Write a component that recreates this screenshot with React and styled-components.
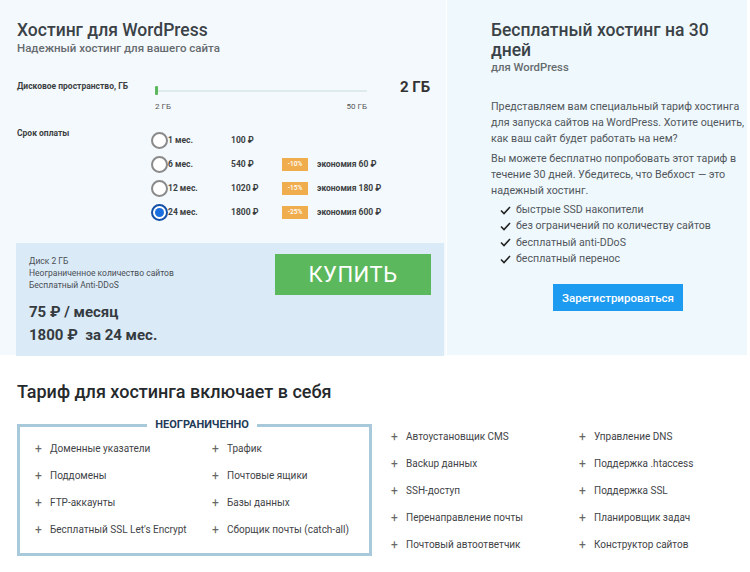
import React, { useState } from "react";
import styled, { createGlobalStyle } from "styled-components";

const Global = createGlobalStyle`
  html, body { margin: 0; padding: 0; background: #fff; }
  body { font-family: Roboto, "Noto Sans", "Liberation Sans", sans-serif; color: #3a4147; }
  * { box-sizing: border-box; }
`;

const Page = styled.div`
  width: 750px;
  height: 572px;
  overflow: hidden;
`;

const Top = styled.div`
  display: flex;
  height: 355px;
`;

const LeftPanel = styled.div`
  width: 446px;
  background: #f4f9fd;
  padding-top: 20px;
`;

const RightPanel = styled.div`
  width: 300px;
  margin-left: 1px;
  background: #eff8fc;
  padding: 20px 0 0 44px;
`;

const Title = styled.h1`
  margin: 0;
  font-size: 17.5px;
  line-height: 20px;
  font-weight: 500;
  color: #3b4247;
`;

const LeftTitle = styled(Title)`
  padding-left: 17px;
`;

const Subtitle = styled.div`
  padding-left: 17px;
  font-size: 11.5px;
  line-height: 16px;
  color: #666b6f;
  font-weight: 500;
`;

const Row = styled.div`
  display: grid;
  grid-template-columns: ${(p) => p.$cols};
  padding-left: 17px;
  margin-top: ${(p) => p.$mt || 0}px;
`;

const SmallLabel = styled.div`
  font-size: 8.5px;
  font-weight: 700;
  color: #3c3f42;
  line-height: 12px;
`;

const SliderWrap = styled.div`
  display: flex;
  flex-direction: column;
`;

const Track = styled.div`
  position: relative;
  height: 2px;
  margin-top: 10px;
  background: #dfeaea;
`;

const Thumb = styled.span`
  position: absolute;
  left: 0;
  top: -4px;
  width: 3px;
  height: 9px;
  background: #5cb85c;
  border-radius: 1px;
`;

const Ticks = styled.div`
  display: flex;
  justify-content: space-between;
  margin-top: 10px;
  font-size: 8px;
  line-height: 10px;
  color: #555;
`;

const BigValue = styled.div`
  padding-left: 33px;
  font-size: 15px;
  font-weight: 700;
  color: #333;
  line-height: 14px;
`;

const Options = styled.div`
  display: flex;
  flex-direction: column;
  gap: 6px;
  margin-top: 4px;
`;

const Option = styled.label`
  display: grid;
  grid-template-columns: 17px 63px 51px 35px auto;
  align-items: center;
  height: 18px;
  font-size: 8.5px;
  font-weight: 700;
  color: #3c3f42;
  cursor: pointer;
`;

const Radio = styled.span`
  width: 17px;
  height: 17px;
  border-radius: 50%;
  border: 2px solid ${(p) => (p.$on ? "#1450a8" : "#8a8a8a")};
  background: #fff;
  display: flex;
  align-items: center;
  justify-content: center;
  &::after {
    content: "";
    width: 9px;
    height: 9px;
    border-radius: 50%;
    background: ${(p) => (p.$on ? "#1a6fe0" : "transparent")};
  }
`;

const Badge = styled.span`
  width: 26px;
  height: 13px;
  background: #f0ad4e;
  color: #fff;
  font-size: 6.5px;
  font-weight: 500;
  display: flex;
  align-items: center;
  justify-content: center;
`;

const BuyBox = styled.div`
  margin: 22px 0 0 16px;
  width: 428px;
  height: 113px;
  background: #dbeaf7;
  padding: 12px 13px 0 13px;
  display: flex;
  justify-content: space-between;
  align-items: flex-start;
`;

const Features = styled.div`
  font-size: 8.5px;
  line-height: 12px;
  color: #4a4f54;
`;

const Prices = styled.div`
  margin-top: 10px;
`;

const Price = styled.div`
  font-size: 15px;
  font-weight: 700;
  line-height: 23px;
  color: #353b40;
`;

const BuyButton = styled.button`
  margin-top: -1px;
  width: 156px;
  height: 41px;
  border: 0;
  background: #5cb85c;
  color: #fff;
  font-family: inherit;
  font-size: 22px;
  letter-spacing: 0.5px;
  cursor: pointer;
`;

const RightSub = styled.div`
  font-size: 11.3px;
  line-height: 16px;
  color: #666b6f;
  font-weight: 500;
`;

const Para = styled.p`
  margin: ${(p) => p.$mt}px 0 0;
  width: 262px;
  font-size: 10.7px;
  line-height: 16px;
  color: #51575c;
`;

const Checks = styled.ul`
  list-style: none;
  margin: 3px 0 0 9px;
  padding: 0;
`;

const Check = styled.li`
  display: flex;
  align-items: center;
  gap: 5px;
  font-size: 10.6px;
  line-height: 16.3px;
  color: #51575c;
`;

const RegButton = styled.button`
  margin: 17px 0 0 62px;
  width: 130px;
  height: 27px;
  border: 0;
  background: #1d9bf0;
  color: #fff;
  font-family: inherit;
  font-size: 11.5px;
  font-weight: 500;
  cursor: pointer;
`;

const Bottom = styled.div`
  padding: 26px 0 0 17px;
`;

const H2 = styled.h2`
  margin: 0;
  font-size: 18px;
  line-height: 22px;
  font-weight: 500;
  color: #25292c;
`;

const BottomRow = styled.div`
  display: flex;
  margin-top: 16px;
`;

const Fieldset = styled.fieldset`
  margin: 0;
  min-width: 0;
  width: 355px;
  height: 137px;
  border: 3px solid #a7c9d9;
  padding: 11px 0 0 15px;
`;

const Legend = styled.legend`
  margin: 0 auto;
  padding: 0 8px;
  font-size: 11px;
  font-weight: 700;
  color: #1f3a57;
  line-height: 12px;
`;

const ItemGrid = styled.div`
  display: grid;
  grid-template-columns: ${(p) => p.$cols};
  row-gap: ${(p) => p.$gap}px;
`;

const Item = styled.div`
  display: flex;
  align-items: center;
  font-size: 10px;
  line-height: 14px;
  color: #3f4448;
  white-space: nowrap;
`;

const Plus = styled.span`
  width: 15px;
  color: #666;
  font-size: 12px;
`;

const OuterList = styled.div`
  padding: 11px 0 0 19px;
`;

const periods = [
  { m: "1 мес.", p: "100 ₽" },
  { m: "6 мес.", p: "540 ₽", d: "-10%", s: "экономия 60 ₽" },
  { m: "12 мес.", p: "1020 ₽", d: "-15%", s: "экономия 180 ₽" },
  { m: "24 мес.", p: "1800 ₽", d: "-25%", s: "экономия 600 ₽" },
];

const unlimited = [
  "Доменные указатели",
  "Трафик",
  "Поддомены",
  "Почтовые ящики",
  "FTP-аккаунты",
  "Базы данных",
  "Бесплатный SSL Let's Encrypt",
  "Сборщик почты (catch-all)",
];

const extra = [
  "Автоустановщик CMS",
  "Управление DNS",
  "Backup данных",
  "Поддержка .htaccess",
  "SSH-доступ",
  "Поддержка SSL",
  "Перенаправление почты",
  "Планировщик задач",
  "Почтовый автоответчик",
  "Конструктор сайтов",
];

const checks = [
  "быстрые SSD накопители",
  "без ограничений по количеству сайтов",
  "бесплатный anti-DDoS",
  "бесплатный перенос",
];

const CheckIcon = () => (
  <svg width="11" height="9" viewBox="0 0 11 9">
    <path d="M1 4.5 L4 7.5 L10 1" fill="none" stroke="#222" strokeWidth="1.6" />
  </svg>
);

const App = () => {
  const [sel, setSel] = useState(3);

  return (
    <Page>
      <Global />
      <Top>
        <LeftPanel>
          <LeftTitle>Хостинг для WordPress</LeftTitle>
          <Subtitle>Надежный хостинг для вашего сайта</Subtitle>

          <Row $cols="138px 212px auto" $mt={24}>
            <SmallLabel>Дисковое пространство, ГБ</SmallLabel>
            <SliderWrap>
              <Track>
                <Thumb />
              </Track>
              <Ticks>
                <span>2 ГБ</span>
                <span>50 ГБ</span>
              </Ticks>
            </SliderWrap>
            <BigValue>2 ГБ</BigValue>
          </Row>

          <Row $cols="134px auto" $mt={15}>
            <SmallLabel>Срок оплаты</SmallLabel>
            <Options>
              {periods.map((o, i) => (
                <Option key={i} onClick={() => setSel(i)}>
                  <Radio $on={sel === i} />
                  <span>{o.m}</span>
                  <span>{o.p}</span>
                  {o.d ? <Badge>{o.d}</Badge> : <span />}
                  <span>{o.s}</span>
                </Option>
              ))}
            </Options>
          </Row>

          <BuyBox>
            <div>
              <Features>
                Диск 2 ГБ
                <br />
                Неограниченное количество сайтов
                <br />
                Бесплатный Anti-DDoS
              </Features>
              <Prices>
                <Price>75 ₽ / месяц</Price>
                <Price>1800 ₽&nbsp;&nbsp;за 24 мес.</Price>
              </Prices>
            </div>
            <BuyButton>КУПИТЬ</BuyButton>
          </BuyBox>
        </LeftPanel>

        <RightPanel>
          <Title>Бесплатный хостинг на 30 дней</Title>
          <RightSub>для WordPress</RightSub>
          <Para $mt={23}>
            Представляем вам специальный тариф хостинга для запуска сайтов на
            WordPress. Хотите оценить, как ваш сайт будет работать на нем?
          </Para>
          <Para $mt={4}>
            Вы можете бесплатно попробовать этот тариф в течение 30 дней.
            Убедитесь, что Вебхост — это надежный хостинг.
          </Para>
          <Checks>
            {checks.map((c) => (
              <Check key={c}>
                <CheckIcon />
                {c}
              </Check>
            ))}
          </Checks>
          <RegButton>Зарегистрироваться</RegButton>
        </RightPanel>
      </Top>

      <Bottom>
        <H2>Тариф для хостинга включает в себя</H2>
        <BottomRow>
          <Fieldset>
            <Legend>НЕОГРАНИЧЕННО</Legend>
            <ItemGrid $cols="177px auto" $gap={13}>
              {unlimited.map((t) => (
                <Item key={t}>
                  <Plus>+</Plus>
                  {t}
                </Item>
              ))}
            </ItemGrid>
          </Fieldset>
          <OuterList>
            <ItemGrid $cols="188px auto" $gap={13}>
              {extra.map((t) => (
                <Item key={t}>
                  <Plus>+</Plus>
                  {t}
                </Item>
              ))}
            </ItemGrid>
          </OuterList>
        </BottomRow>
      </Bottom>
    </Page>
  );
};

export default App;
